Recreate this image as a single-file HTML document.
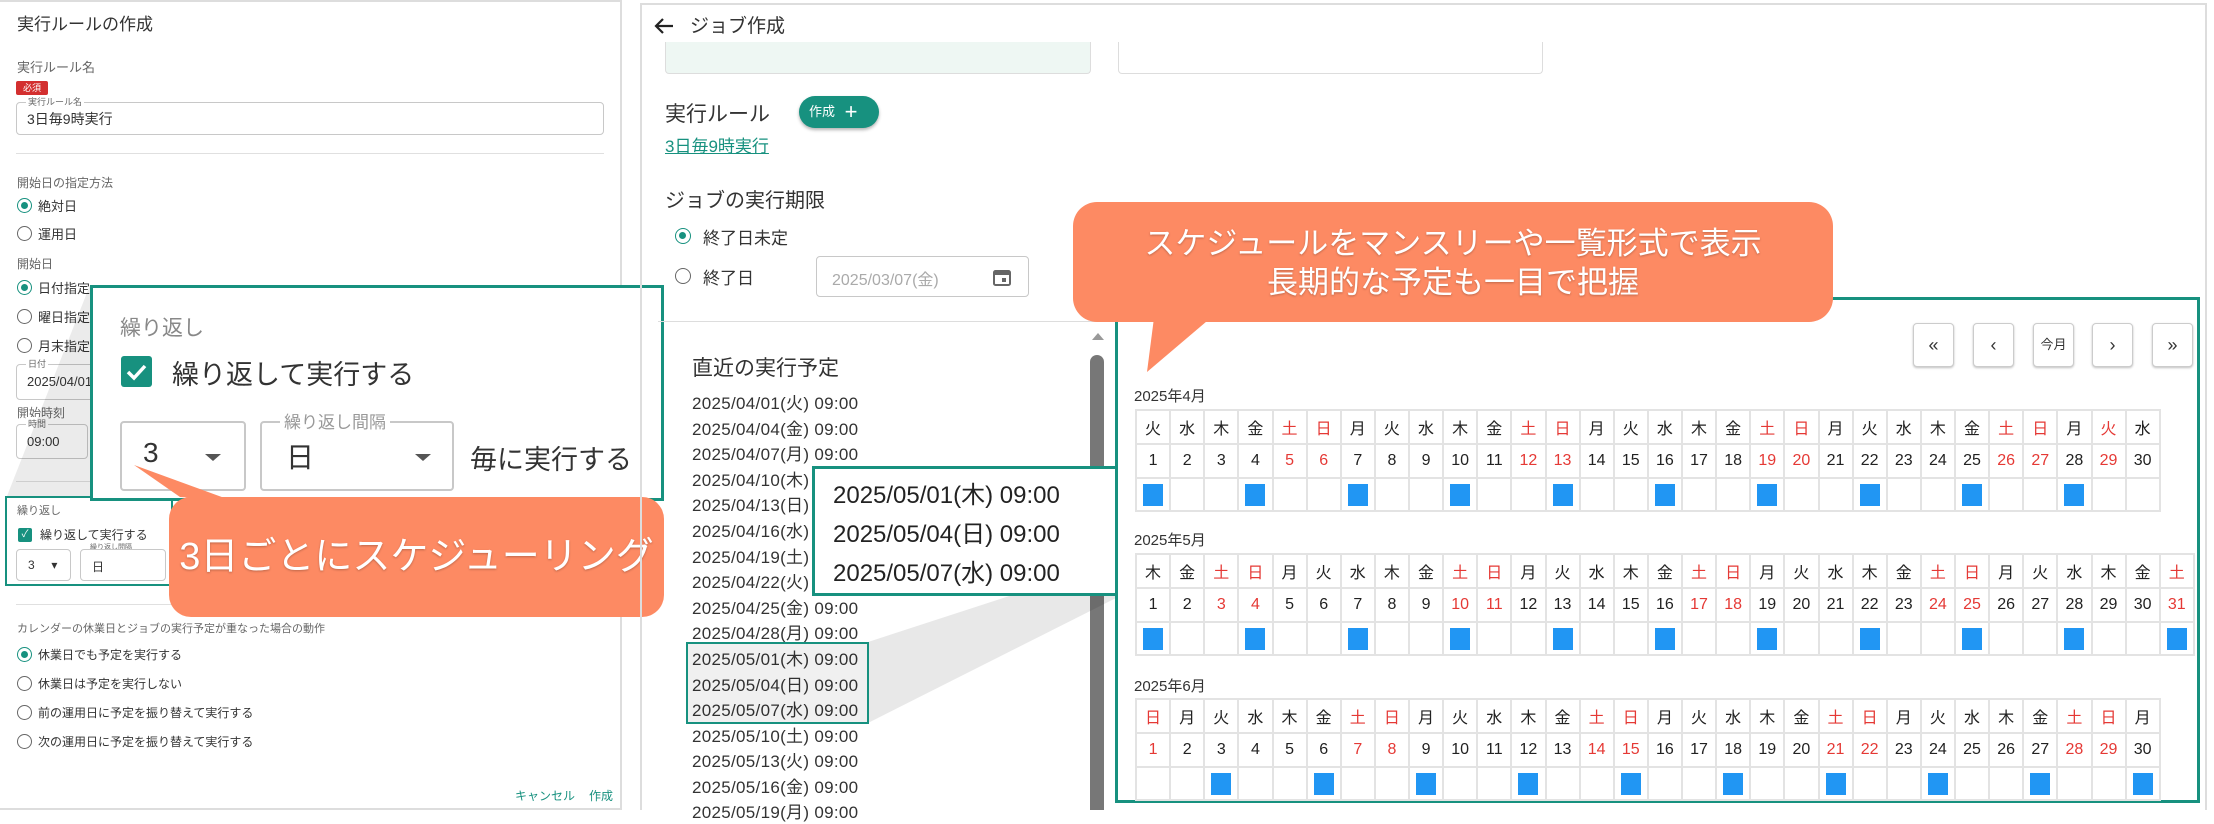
<!DOCTYPE html>
<html><head><meta charset="utf-8">
<style>
*{box-sizing:border-box;margin:0;padding:0}
body{width:2214px;height:810px;position:relative;overflow:hidden;background:#fff;font-family:"Liberation Sans","Noto Sans CJK JP",sans-serif;color:#333}
.a{position:absolute;white-space:nowrap}
.g{color:#666}
.rad{position:absolute;width:15px;height:15px;border:1.5px solid #666;border-radius:50%}
.rad.on{border-color:#17917f}
.rad.on::after{content:"";position:absolute;left:2.5px;top:2.5px;width:7px;height:7px;border-radius:50%;background:#17917f}
.fld{position:absolute;border:1px solid #c8c8c8;border-radius:4px;background:#fff}
.teal{color:#17917f}
.cal{position:absolute;left:1135px;border-collapse:collapse;table-layout:fixed}
.cal td{width:34.13px;border:2px solid #e3e3e3;text-align:center;font-size:16px;color:#222;padding:0;font-family:"Liberation Sans Narrow","Liberation Sans","Noto Sans CJK JP",sans-serif}
.cal tr.h td{height:34px}
.cal tr.d td{height:34px}
.cal tr.m td{height:33px}
.cal .r{color:#e53935}
.mk{display:inline-block;width:20px;height:22px;background:#2196f3;vertical-align:middle}
.btn{position:absolute;top:323px;width:41px;height:44px;border:1px solid #ccc;border-radius:4px;box-shadow:0 1px 2px rgba(0,0,0,.25);background:#fff;text-align:center;line-height:42px;font-size:18px;color:#333}
.li{position:absolute;left:692px;font-size:17px;color:#333;letter-spacing:.3px;line-height:22px}
</style></head><body>

<!-- left panel -->
<div class="a" style="left:0;top:0;width:622px;height:810px;border-right:2px solid #ddd;border-top:2px solid #ddd;border-bottom:2px solid #ddd"></div>
<div class="a" style="left:17px;top:10px;font-size:17px;color:#333">実行ルールの作成</div>
<div class="a g" style="left:17px;top:57px;font-size:13px">実行ルール名</div>
<div class="a" style="left:16px;top:81px;width:32px;height:14px;background:#d32f2f;border-radius:2px;color:#fff;font-size:9px;line-height:14px;text-align:center">必須</div>
<div class="fld" style="left:16px;top:102px;width:588px;height:33px"></div>
<div class="a g" style="left:26px;top:95px;font-size:9px;background:#fff;padding:0 2px">実行ルール名</div>
<div class="a" style="left:27px;top:109px;font-size:14px">3日毎9時実行</div>
<div class="a" style="left:16px;top:153px;width:588px;border-top:1px solid #e0e0e0"></div>
<div class="a g" style="left:17px;top:174px;font-size:12px">開始日の指定方法</div>
<div class="rad on" style="left:17px;top:198px"></div><div class="a" style="left:38px;top:196px;font-size:13px">絶対日</div>
<div class="rad" style="left:17px;top:226px"></div><div class="a" style="left:38px;top:224px;font-size:13px">運用日</div>
<div class="a g" style="left:17px;top:255px;font-size:12px">開始日</div>
<div class="rad on" style="left:17px;top:280px"></div><div class="a" style="left:38px;top:278px;font-size:13px">日付指定</div>
<div class="rad" style="left:17px;top:309px"></div><div class="a" style="left:38px;top:307px;font-size:13px">曜日指定</div>
<div class="rad" style="left:17px;top:338px"></div><div class="a" style="left:38px;top:336px;font-size:13px">月末指定</div>
<div class="fld" style="left:16px;top:364px;width:200px;height:36px"></div>
<div class="a g" style="left:26px;top:357px;font-size:9px;background:#fff;padding:0 2px">日付</div>
<div class="a" style="left:27px;top:374px;font-size:13px">2025/04/01</div>
<div class="a g" style="left:17px;top:404px;font-size:12px">開始時刻</div>
<div class="fld" style="left:16px;top:424px;width:72px;height:35px"></div>
<div class="a g" style="left:26px;top:417px;font-size:9px;background:#fff;padding:0 2px">時間</div>
<div class="a" style="left:27px;top:434px;font-size:13px">09:00</div>
<div class="a" style="left:16px;top:481px;width:588px;border-top:1px solid #e0e0e0"></div>
<!-- small repeat box -->
<div class="a" style="left:5px;top:496px;width:168px;height:90px;border:2px solid #17917f"></div>
<div class="a g" style="left:17px;top:502px;font-size:11px">繰り返し</div>
<div class="a" style="left:18px;top:528px;width:14px;height:14px;background:#17917f;border-radius:2px;color:#fff;font-size:10px;line-height:14px;text-align:center">✓</div>
<div class="a" style="left:40px;top:526px;font-size:12px">繰り返して実行する</div>
<div class="a g" style="left:90px;top:542px;font-size:7px">繰り返し間隔</div>
<div class="fld" style="left:16px;top:549px;width:55px;height:32px"></div><div class="a" style="left:28px;top:558px;font-size:12px">3 &nbsp;&nbsp;&nbsp;&nbsp;▾</div>
<div class="fld" style="left:80px;top:549px;width:86px;height:32px"></div><div class="a" style="left:92px;top:558px;font-size:12px">日</div>
<div class="a" style="left:16px;top:604px;width:588px;border-top:1px solid #e0e0e0"></div>
<div class="a g" style="left:17px;top:620px;font-size:11px">カレンダーの休業日とジョブの実行予定が重なった場合の動作</div>
<div class="rad on" style="left:17px;top:647px"></div><div class="a" style="left:38px;top:646px;font-size:12px">休業日でも予定を実行する</div>
<div class="rad" style="left:17px;top:676px"></div><div class="a" style="left:38px;top:675px;font-size:12px">休業日は予定を実行しない</div>
<div class="rad" style="left:17px;top:705px"></div><div class="a" style="left:38px;top:704px;font-size:12px">前の運用日に予定を振り替えて実行する</div>
<div class="rad" style="left:17px;top:734px"></div><div class="a" style="left:38px;top:733px;font-size:12px">次の運用日に予定を振り替えて実行する</div>
<div class="a teal" style="left:515px;top:787px;font-size:12px">キャンセル</div>
<div class="a teal" style="left:589px;top:787px;font-size:12px">作成</div>

<!-- left zoom connector -->
<svg class="a" style="left:0;top:0" width="700" height="810"><polygon points="7,496 90,285 90,501 170,496" fill="rgba(0,0,0,0.08)"/></svg>

<!-- left zoom box -->
<div class="a" style="left:90px;top:285px;width:574px;height:216px;background:#fff;border:3px solid #17917f"></div>
<div class="a" style="left:120px;top:312px;font-size:21px;color:#888">繰り返し</div>
<div class="a" style="left:121px;top:356px;width:31px;height:31px;background:#17917f;border-radius:3px"><svg width="31" height="31"><path d="M7 16 L13 22 L24 10" stroke="#fff" stroke-width="3.5" fill="none"/></svg></div>
<div class="a" style="left:172px;top:353px;font-size:27px;color:#333">繰り返して実行する</div>
<div class="fld" style="left:120px;top:421px;width:126px;height:70px;border-width:2px"></div>
<div class="a" style="left:143px;top:437px;font-size:28px">3</div>
<svg class="a" style="left:203px;top:452px" width="20" height="10"><path d="M2 2 L10 9 L18 2 Z" fill="#555"/></svg>
<div class="fld" style="left:260px;top:421px;width:194px;height:70px;border-width:2px"></div>
<div class="a" style="left:280px;top:408px;font-size:17px;color:#999;background:#fff;padding:0 4px">繰り返し間隔</div>
<div class="a" style="left:286px;top:436px;font-size:28px">日</div>
<svg class="a" style="left:413px;top:452px" width="20" height="10"><path d="M2 2 L10 9 L18 2 Z" fill="#555"/></svg>
<div class="a" style="left:470px;top:438px;font-size:27px;color:#333">毎に実行する</div>

<!-- left callout -->
<svg class="a" style="left:120px;top:455px" width="120" height="70"><polygon points="14,10 60,42 110,45" fill="#fd8a63"/></svg>
<div class="a" style="left:169px;top:497px;width:495px;height:120px;background:#fd8a63;border-radius:22px;color:#fff;font-size:38px;line-height:120px;text-align:center;text-shadow:0 1px 2px rgba(0,0,0,.25)">3日ごとにスケジューリング</div>

<!-- middle panel -->
<div class="a" style="left:640px;top:3px;width:1567px;height:807px;border-left:2px solid #ddd;border-top:2px solid #ddd;border-right:2px solid #ddd"></div>
<svg class="a" style="left:652px;top:14px" width="24" height="24"><path d="M21 12 H4 M11 5 L4 12 L11 19" stroke="#222" stroke-width="2.2" fill="none"/></svg>
<div class="a" style="left:690px;top:11px;font-size:19px;color:#333">ジョブ作成</div>
<div class="a" style="left:665px;top:42px;width:426px;height:32px;background:#eef7f3;border:1px solid #ddd;border-top:none;border-radius:0 0 4px 4px"></div>
<div class="a" style="left:1118px;top:42px;width:425px;height:32px;border:1px solid #ddd;border-top:none;border-radius:0 0 4px 4px"></div>
<div class="a" style="left:665px;top:98px;font-size:21px;color:#333">実行ルール</div>
<div class="a" style="left:799px;top:96px;width:80px;height:32px;background:#17917f;border-radius:16px;box-shadow:0 2px 3px rgba(0,0,0,.3);color:#fff;font-size:13px;line-height:32px;padding-left:10px">作成 <span style="font-size:22px;vertical-align:-3px;margin-left:6px">+</span></div>
<div class="a teal" style="left:665px;top:132px;font-size:17px;text-decoration:underline">3日毎9時実行</div>
<div class="a" style="left:665px;top:184px;font-size:20px;color:#333">ジョブの実行期限</div>
<div class="rad on" style="left:675px;top:228px;width:16px;height:16px"></div><div class="a" style="left:703px;top:224px;font-size:17px">終了日未定</div>
<div class="rad" style="left:675px;top:268px;width:16px;height:16px"></div><div class="a" style="left:703px;top:264px;font-size:17px">終了日</div>
<div class="fld" style="left:816px;top:256px;width:213px;height:41px"></div>
<div class="a" style="left:832px;top:266px;font-size:16px;color:#aaa">2025/03/07(金)</div>
<svg class="a" style="left:991px;top:266px" width="22" height="22"><rect x="3" y="5" width="16" height="14" rx="1.5" fill="none" stroke="#666" stroke-width="2"/><rect x="3" y="5" width="16" height="4" fill="#666"/><rect x="11" y="12" width="4" height="4" fill="#666"/></svg>
<div class="a" style="left:658px;top:321px;width:450px;border-top:1px solid #ddd"></div>
<!-- scrollbar -->
<svg class="a" style="left:1090px;top:330px" width="16" height="12"><path d="M2 10 L8 3 L14 10 Z" fill="#999"/></svg>
<div class="a" style="left:1090px;top:355px;width:14px;height:455px;background:#777;border-radius:7px 7px 0 0"></div>
<div class="a" style="left:692px;top:352px;font-size:21px;color:#333">直近の実行予定</div>
<div class="li" style="top:393px">2025/04/01(火) 09:00</div>
<div class="li" style="top:419px">2025/04/04(金) 09:00</div>
<div class="li" style="top:444px">2025/04/07(月) 09:00</div>
<div class="li" style="top:470px">2025/04/10(木) 09:00</div>
<div class="li" style="top:495px">2025/04/13(日) 09:00</div>
<div class="li" style="top:521px">2025/04/16(水) 09:00</div>
<div class="li" style="top:547px">2025/04/19(土) 09:00</div>
<div class="li" style="top:572px">2025/04/22(火) 09:00</div>
<div class="li" style="top:598px">2025/04/25(金) 09:00</div>
<div class="li" style="top:623px">2025/04/28(月) 09:00</div>
<div class="li" style="top:649px">2025/05/01(木) 09:00</div>
<div class="li" style="top:675px">2025/05/04(日) 09:00</div>
<div class="li" style="top:700px">2025/05/07(水) 09:00</div>
<div class="li" style="top:726px">2025/05/10(土) 09:00</div>
<div class="li" style="top:751px">2025/05/13(火) 09:00</div>
<div class="li" style="top:777px">2025/05/16(金) 09:00</div>
<div class="li" style="top:802px">2025/05/19(月) 09:00</div>
<svg class="a" style="left:0;top:0" width="2214" height="810"><polygon points="868,642 868,723 1120,596 1120,560" fill="rgba(0,0,0,0.09)"/><rect x="686" y="642" width="183" height="81" fill="rgba(0,0,0,0.06)"/></svg>
<div class="a" style="left:686px;top:642px;width:183px;height:82px;border:2px solid #17917f"></div>
<div class="a" style="left:812px;top:466px;width:308px;height:130px;background:#fff;border:3px solid #17917f"></div>
<div class="a" style="left:833px;top:476px;font-size:24px;color:#222;line-height:39px">2025/05/01(木) 09:00<br>2025/05/04(日) 09:00<br>2025/05/07(水) 09:00</div>

<!-- calendar panel -->
<div class="a" style="left:1115px;top:297px;width:1085px;height:506px;border:3px solid #17917f;background:#fff"></div>
<div class="btn" style="left:1913px">«</div>
<div class="btn" style="left:1973px">‹</div>
<div class="btn" style="left:2033px;font-size:13px">今月</div>
<div class="btn" style="left:2092px">›</div>
<div class="btn" style="left:2152px">»</div>
<div class="a" style="left:1134px;top:385px;font-size:15px">2025年4月</div>
<div class="a" style="left:1134px;top:529px;font-size:15px">2025年5月</div>
<div class="a" style="left:1134px;top:675px;font-size:15px">2025年6月</div>
<div id="cals"></div>

<!-- right callout -->
<svg class="a" style="left:1130px;top:300px" width="120" height="80"><polygon points="25,10 90,10 17,72" fill="#fd8a63"/></svg>
<div class="a" style="left:1073px;top:202px;width:760px;height:120px;background:#fd8a63;border-radius:24px;color:#fff;font-size:31px;line-height:39px;text-align:center;padding-top:22px;text-shadow:0 1px 2px rgba(0,0,0,.25)">スケジュールをマンスリーや一覧形式で表示<br>長期的な予定も一目で把握</div>

<script>
var W=['日','月','火','水','木','金','土'];
function mk(top,start,days,first){
 var h='<table class="cal" style="top:'+top+'px"><tr class="h">',d='<tr class="d">',m='<tr class="m">';
 for(var i=1;i<=days;i++){var w=(start+i-1)%7;var r=(w==0||w==6)?' class="r"':'';
  if(top<500&&i==29)r=' class="r"';
  h+='<td'+r+'>'+W[w]+'</td>';d+='<td'+r+'>'+i+'</td>';
  m+='<td>'+(((i-first)%3==0&&i>=first)?'<span class="mk"></span>':'')+'</td>';}
 return h+'</tr>'+d+'</tr>'+m+'</tr></table>';}
document.getElementById('cals').innerHTML=mk(409,2,30,1)+mk(553,4,31,1)+mk(698,0,30,3);
</script>
</body></html>
